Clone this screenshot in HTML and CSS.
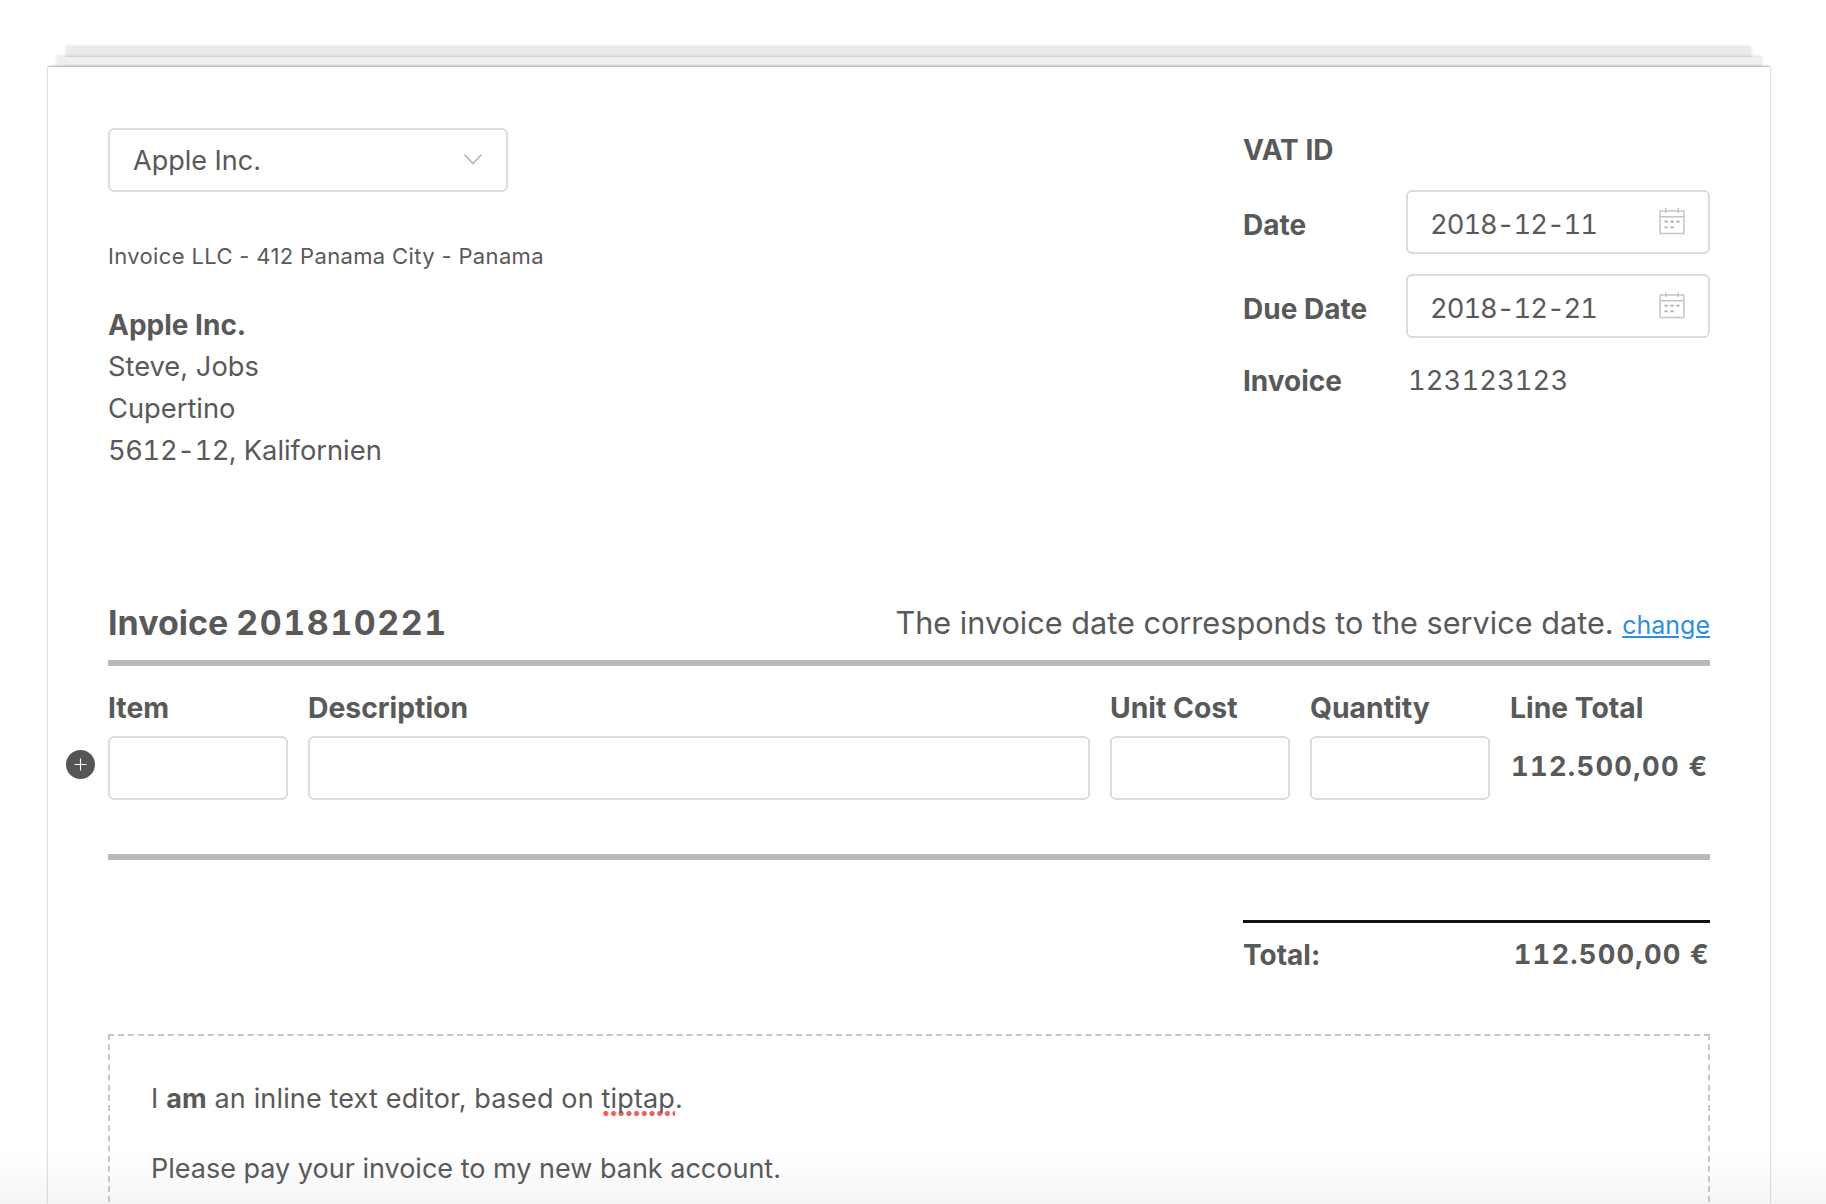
FILE: index.html
```html
<!DOCTYPE html>
<html lang="en">
<head>
<meta charset="utf-8">
<title>Invoice</title>
<link rel="stylesheet" href="styles.css">
</head>
<body>
<main class="stack">
  <div class="sheet sheet-back"></div>
  <div class="sheet sheet-mid"></div>
  <article class="card">
    <section class="head">
      <div class="client">
        <div class="field select">
          <span>Apple Inc.</span>
          <svg class="chevron" viewBox="0 0 20 12" aria-hidden="true"><path d="M1.5 1.5 10 10.5l8.500-9"/></svg>
        </div>
        <p class="sender">Invoice LLC - 412 Panama City - Panama</p>
        <address class="address">
          <strong>Apple Inc.</strong>
          <span>Steve, Jobs</span>
          <span>Cupertino</span>
          <span><span class="num num-address">5612-12,</span> Kalifornien</span>
        </address>
      </div>
      <div class="meta">
        <div class="meta-row meta-vat"><strong>VAT ID</strong></div>
        <div class="meta-row">
          <strong>Date</strong>
          <div class="field date">
            <span class="num num-date">2018-12-11</span>
            <svg class="cal" viewBox="0 0 24 24" aria-hidden="true"><path d="M2.500 4h19v18h-19zM2.500 8.500h19M7 1.500v4M17 1.500v4"/><path class="dots" d="M6 12.500h2.500M10.800 12.500h2.500M15.500 12.500h2.500M6 17h2.500M10.800 17h2.500"/></svg>
          </div>
        </div>
        <div class="meta-row">
          <strong>Due Date</strong>
          <div class="field date">
            <span class="num num-date">2018-12-21</span>
            <svg class="cal" viewBox="0 0 24 24" aria-hidden="true"><path d="M2.500 4h19v18h-19zM2.500 8.500h19M7 1.500v4M17 1.500v4"/><path class="dots" d="M6 12.500h2.500M10.800 12.500h2.500M15.500 12.500h2.500M6 17h2.500M10.800 17h2.500"/></svg>
          </div>
        </div>
        <div class="meta-row meta-invoice">
          <strong>Invoice</strong>
          <span class="num num-tight invoice-no">123123123</span>
        </div>
      </div>
    </section>

    <section class="title-row">
      <h1>Invoice <span class="num">201810221</span></h1>
      <p>The invoice date corresponds to the service date. <a href="#">change</a></p>
    </section>

    <section class="items">
      <div class="cell-head">Item</div>
      <div class="cell-head">Description</div>
      <div class="cell-head">Unit Cost</div>
      <div class="cell-head">Quantity</div>
      <div class="cell-head">Line Total</div>
      <div class="field cell-input item-first">
        <button class="add" type="button" aria-label="Add row"><svg viewBox="0 0 12 12" aria-hidden="true"><path d="M6 .5v11M.5 6h11"/></svg></button>
      </div>
      <div class="field cell-input"></div>
      <div class="field cell-input"></div>
      <div class="field cell-input"></div>
      <div class="line-total num">112.500,00 €</div>
    </section>

    <section class="totals">
      <strong>Total:</strong>
      <strong class="num num-total">112.500,00 €</strong>
    </section>

    <section class="editor">
      <p class="editor-first">I <strong>am</strong> an inline text editor, based on <span class="misspelt">tiptap</span>.</p>
      <p>Please pay your invoice to my new bank account.</p>
    </section>
  </article>
</main>
</body>
</html>
```

FILE: styles.css
```css
* { box-sizing: border-box; }

html, body {
  margin: 0;
  height: 1204px;
  overflow: hidden;
  background: #fff;
}

body {
  font-family: Inter, "Noto Sans", sans-serif;
  color: #595959;
  font-size: 27.300px;
}

.num {
  font-variant-numeric: tabular-nums;
  letter-spacing: 1.500px;
}

.num-tight {
  letter-spacing: .1px;
}

.num-address {
  letter-spacing: -.4px;
}

.num-date {
  letter-spacing: -1px;
}

.num-total {
  letter-spacing: 1.200px;
}

.stack {
  height: 1204px;
  overflow: hidden;
  padding-top: 47px;
  display: flex;
  flex-direction: column;
  background: linear-gradient(to top, #f5f5f5, #fff 52px);
}

.sheet {
  box-shadow: 0 -1px 3px rgba(0, 0, 0, .14);
}

.sheet-back {
  height: 10px;
  margin: 0 75px 0 66px;
  background: #ebebeb;
}

.sheet-mid {
  height: 10px;
  margin: 0 64px 0 57px;
  background: #efefef;
  position: relative;
}

.card {
  position: relative;
  margin: 0 56px 0 48px;
  padding: 61px 60px 0;
  height: 1137px;
  overflow: hidden;
  background: linear-gradient(to top, #f5f5f5, #fff 52px);
  box-shadow: 0 -1px 2px rgba(0, 0, 0, .26), 0 0 2px rgba(0, 0, 0, .12);
}

.head {
  display: flex;
  justify-content: space-between;
  height: 462px;
}

.client {
  width: 600px;
}

.field {
  border: 2px solid #dcdcdc;
  border-radius: 6px;
  background: #fff;
}

.select {
  width: 400px;
  height: 64px;
  padding: 0 23px;
  font-size: 27px;
  display: flex;
  align-items: center;
  justify-content: space-between;
}

.chevron {
  width: 20px;
  height: 12px;
  margin: 0 0 2px 0;
}

.chevron path {
  fill: none;
  stroke: #b4b4b4;
  stroke-width: 1.600;
}

.sender {
  margin: 50px 0 0;
  font-size: 22px;
  line-height: 28px;
  letter-spacing: .35px;
}

.address {
  margin-top: 34px;
  display: flex;
  flex-direction: column;
  font-style: normal;
  line-height: 42px;
}

.meta {
  width: 467px;
  display: flex;
  flex-direction: column;
}

strong {
  font-weight: 700;
  font-size: 28px;
}

.meta-row {
  display: flex;
  align-items: center;
  height: 72px;
  margin-bottom: 12px;
}

.meta-row:nth-child(3) {
  margin-bottom: 18px;
}

.meta-row > strong {
  width: 163px;
  padding-top: 5px;
}

.meta-vat {
  height: 44px;
  margin-bottom: 14px;
}

.meta-row.meta-vat > strong {
  padding-top: 0;
}

.date {
  width: 304px;
  height: 64px;
  padding: 4px 21px 0 22px;
  display: flex;
  align-items: center;
  justify-content: space-between;
}

.cal {
  width: 30px;
  height: 30px;
  margin-bottom: 6px;
}

.cal path {
  fill: none;
  stroke: #c4c4c4;
  stroke-width: 1.200;
}

.cal path.dots {
  stroke: #aaa;
  stroke-width: 1.400;
}

.meta-invoice {
  height: 40px;
  margin-bottom: 0;
}

.meta-row.meta-invoice > strong {
  padding-top: 1px;
}

.invoice-no {
  margin-left: 2px;
}

.title-row {
  display: flex;
  align-items: center;
  justify-content: space-between;
  height: 76px;
  border-bottom: 6px solid #b9b9b9;
  padding-bottom: 6px;
}

.title-row h1 {
  margin: 0;
  font-size: 34px;
  font-weight: 700;
}

.title-row p {
  margin: 0;
  font-size: 30.650px;
}

.title-row a {
  font-size: 25px;
  color: #2e8fe0;
}

.items {
  display: grid;
  grid-template-columns: 180px 782px 180px 180px 200px;
  grid-template-rows: 70px 64px;
  column-gap: 20px;
  padding-bottom: 54px;
  border-bottom: 6px solid #b9b9b9;
}

.cell-head {
  font-weight: 700;
  font-size: 28.300px;
  align-self: center;
  padding-top: 14px;
}

.cell-input {
  position: relative;
}

.add {
  position: absolute;
  left: -44px;
  top: 12px;
  width: 29px;
  height: 29px;
  padding: 0;
  border: 0;
  border-radius: 50%;
  background: #555;
  display: flex;
  align-items: center;
  justify-content: center;
}

.add svg {
  width: 13px;
  height: 13px;
}

.add path {
  stroke: #fff;
  stroke-width: 1;
  fill: none;
}

.line-total {
  font-weight: 700;
  align-self: center;
  white-space: nowrap;
  letter-spacing: 1.300px;
  padding-bottom: 4px;
  padding-left: 1px;
}

.totals {
  margin: 60px 0 0 auto;
  width: 467px;
  height: 66px;
  border-top: 3px solid #111;
  display: flex;
  align-items: center;
  justify-content: space-between;
}

.totals .num {
  font-size: 27.300px;
}

.editor {
  margin-top: 48px;
  height: 300px;
  border: 2px dashed #c6c6c6;
  padding: 47px 41px 0;
  font-size: 27px;
}

.editor p {
  margin: 0 0 38px;
  line-height: 32px;
}

.editor strong {
  font-size: 27px;
}

.editor-first {
  letter-spacing: .15px;
}

.misspelt {
  padding-bottom: 1px;
  background: radial-gradient(circle at center, #ee5f5f 0 2.300px, transparent 2.800px) left bottom / 7.700px 5px repeat-x;
}
```
